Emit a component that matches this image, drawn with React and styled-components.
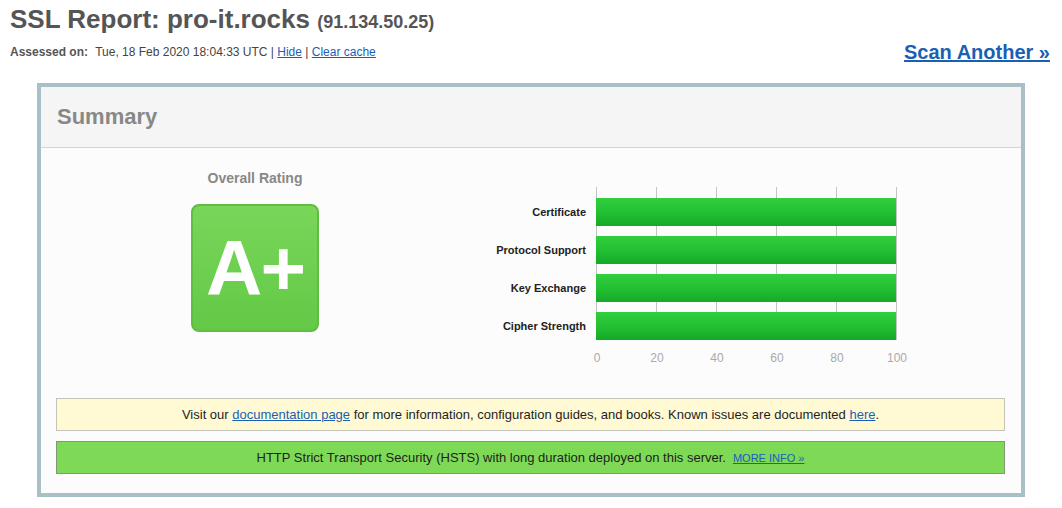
import styled, { createGlobalStyle } from "styled-components";

const GlobalStyle = createGlobalStyle`
  body {
    margin: 0;
    background: #ffffff;
    font-family: "Liberation Sans", Arial, sans-serif;
    color: #333;
  }
`;

const Page = styled.div`
  width: 1062px;
  height: 508px;
  overflow: hidden;
`;

const TopBar = styled.div`
  display: flex;
  justify-content: space-between;
  align-items: flex-end;
  padding: 4px 12px 0 10px;
`;

const Heading = styled.div`
  display: flex;
  flex-direction: column;
`;

const Title = styled.h1`
  margin: 0;
  font-size: 26px;
  font-weight: bold;
  color: #555;
  line-height: 30px;
`;

const Ip = styled.span`
  font-size: 18px;
`;

const Assessed = styled.div`
  margin-top: 7px;
  font-size: 12px;
  color: #444;
  line-height: 16px;
`;

const Label = styled.b`
  color: #555;
  margin-right: 4px;
`;

const SmallLink = styled.a`
  color: #1a5fb4;
  text-decoration: underline;
  cursor: pointer;
`;

const ScanLink = styled.a`
  font-size: 20px;
  font-weight: bold;
  color: #1a5fb4;
  text-decoration: underline;
  margin-bottom: -4px;
  cursor: pointer;
`;

const Summary = styled.div`
  margin: 23px auto 0;
  width: 980px;
  border: 4px solid #a9c1c6;
  background: #fcfcfc;
`;

const SummaryHeader = styled.div`
  height: 60px;
  display: flex;
  align-items: center;
  padding-left: 16px;
  background: #f5f5f5;
  border-bottom: 1px solid #cfd6d8;
  font-size: 22px;
  font-weight: bold;
  color: #888;
`;

const SummaryBody = styled.div`
  padding: 22px 16px 19px 15px;
`;

const TopRow = styled.div`
  display: flex;
  margin-left: -15px;
`;

const RatingCol = styled.div`
  width: 428px;
  display: flex;
  flex-direction: column;
  align-items: center;
`;

const RatingTitle = styled.div`
  font-size: 14px;
  font-weight: bold;
  color: #888;
  line-height: 16px;
`;

const Grade = styled.div`
  margin-top: 18px;
  width: 124px;
  height: 124px;
  box-sizing: content-box;
  border: 2px solid #5fbd41;
  border-radius: 8px;
  background: linear-gradient(#79d65a, #63c946);
  display: flex;
  align-items: center;
  justify-content: center;
  color: #fff;
  font-size: 78px;
  font-weight: bold;
  letter-spacing: -2px;
`;

const Chart = styled.div`
  margin-top: 17px;
  display: grid;
  grid-template-columns: 127px 301px;
`;

const Labels = styled.div`
  display: flex;
  flex-direction: column;
  gap: 10px;
  padding: 11px 10px 0 0;
`;

const BarLabel = styled.div`
  height: 28px;
  display: flex;
  align-items: center;
  justify-content: flex-end;
  font-size: 11px;
  font-weight: bold;
  color: #222;
`;

const Plot = styled.div`
  display: flex;
  flex-direction: column;
  gap: 10px;
  padding-top: 11px;
  background-image: repeating-linear-gradient(
    to right,
    #c4c4c4 0,
    #c4c4c4 1px,
    transparent 1px,
    transparent 60px
  );
`;

const Bar = styled.div`
  height: 28px;
  width: ${(p) => p.$value * 3}px;
  background: linear-gradient(#30cf3e, #23bf33 55%, #15a828);
`;

const Axis = styled.div`
  grid-column: 2;
  margin-left: -29px;
  margin-top: 11px;
  display: grid;
  grid-template-columns: repeat(6, 60px);
`;

const Tick = styled.span`
  text-align: center;
  font-size: 12px;
  color: #aaa;
`;

const Notice = styled.div`
  margin-top: ${(p) => p.$top}px;
  height: 31px;
  display: flex;
  align-items: center;
  justify-content: center;
  font-size: 13px;
  color: #1e1e1e;
  background: ${(p) => (p.$tone === "green" ? "#7ed957" : "#fff9d4")};
  border: 1px solid ${(p) => (p.$tone === "green" ? "#7f9a74" : "#c4c4b8")};
`;

const MoreInfo = styled.a`
  margin-left: 7px;
  font-size: 11px;
  color: #1560c0;
  text-decoration: underline;
  cursor: pointer;
`;

const bars = [
  { name: "Certificate", value: 100 },
  { name: "Protocol Support", value: 100 },
  { name: "Key Exchange", value: 100 },
  { name: "Cipher Strength", value: 100 },
];

export default function App() {
  return (
    <Page>
      <GlobalStyle />
      <TopBar>
        <Heading>
          <Title>
            SSL Report: pro-it.rocks <Ip>(91.134.50.25)</Ip>
          </Title>
          <Assessed>
            <Label>Assessed on:</Label> Tue, 18 Feb 2020 18:04:33 UTC |{" "}
            <SmallLink>Hide</SmallLink> | <SmallLink>Clear cache</SmallLink>
          </Assessed>
        </Heading>
        <ScanLink>Scan Another »</ScanLink>
      </TopBar>

      <Summary>
        <SummaryHeader>Summary</SummaryHeader>
        <SummaryBody>
          <TopRow>
            <RatingCol>
              <RatingTitle>Overall Rating</RatingTitle>
              <Grade>A+</Grade>
            </RatingCol>
            <Chart>
              <Labels>
                {bars.map((b) => (
                  <BarLabel key={b.name}>{b.name}</BarLabel>
                ))}
              </Labels>
              <Plot>
                {bars.map((b) => (
                  <Bar key={b.name} $value={b.value} />
                ))}
              </Plot>
              <Axis>
                {[0, 20, 40, 60, 80, 100].map((t) => (
                  <Tick key={t}>{t}</Tick>
                ))}
              </Axis>
            </Chart>
          </TopRow>

          <Notice $top={33}>
            Visit our&nbsp;<SmallLink>documentation page</SmallLink>&nbsp;for
            more information, configuration guides, and books. Known issues are
            documented&nbsp;<SmallLink>here</SmallLink>.
          </Notice>
          <Notice $top={10} $tone="green">
            HTTP Strict Transport Security (HSTS) with long duration deployed on
            this server.
            <MoreInfo>MORE INFO »</MoreInfo>
          </Notice>
        </SummaryBody>
      </Summary>
    </Page>
  );
}
